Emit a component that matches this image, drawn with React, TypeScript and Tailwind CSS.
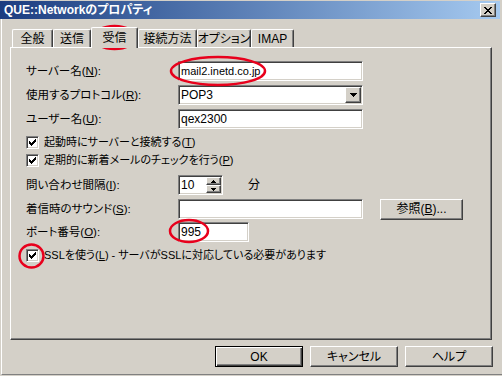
import React from 'react'

const sunken =
  'bg-white border border-t-[#808080] border-l-[#808080] border-b-white border-r-white shadow-[inset_1px_1px_0_#404040,inset_-1px_-1px_0_#d4d0c8]'
const raised =
  'bg-[#d4d0c8] border border-t-white border-l-white border-b-[#404040] border-r-[#404040] shadow-[inset_-1px_-1px_0_#808080]'

function Check() {
  return (
    <span className={`${sunken} w-[13px] h-[13px] flex items-center justify-center shrink-0`}>
      <svg width="7" height="7" viewBox="0 0 7 7" shapeRendering="crispEdges">
        <path d="M0 2h1v3H0z M1 3h1v3H1z M2 4h1v3H2z M3 3h1v3H3z M4 2h1v3H4z M5 1h1v3H5z M6 0h1v3H6z" fill="#000" />
      </svg>
    </span>
  )
}

function Label({ text, k, w = 'w-[152px]' }: { text: string; k: string; w?: string }) {
  return (
    <span className={`${w} shrink-0 text-[11.5px]`}>
      {text}(<u>{k}</u>):
    </span>
  )
}

function Tab({ label, w, active }: { label: string; w: string; active?: boolean }) {
  if (active) {
    return (
      <div
        className={`${w} h-[21px] -mb-[1px] relative z-10 bg-[#d4d0c8] border-t border-l border-white border-r border-r-[#404040] shadow-[inset_-1px_0_0_#808080] rounded-t-[2px] flex items-start justify-center pt-[3px] whitespace-nowrap`}
      >
        {label}
      </div>
    )
  }
  return (
    <div
      className={`${w} h-[18px] bg-[#d4d0c8] border-t border-l border-white border-r border-r-[#404040] shadow-[inset_-1px_0_0_#808080] rounded-t-[2px] flex items-center justify-center pt-[1px] whitespace-nowrap`}
    >
      {label}
    </div>
  )
}

function Btn({ children, w, def }: { children: React.ReactNode; w: string; def?: boolean }) {
  if (def) {
    return (
      <div
        className={`${w} h-[21px] border border-black bg-[#d4d0c8] shadow-[inset_1px_1px_0_#fff,inset_-1px_-1px_0_#404040,inset_-2px_-2px_0_#808080] flex items-center justify-center`}
      >
        {children}
      </div>
    )
  }
  return <div className={`${w} h-[21px] ${raised} flex items-center justify-center`}>{children}</div>
}

export default function App() {
  return (
    <div className="w-[502px] h-[376px] bg-[#d4d0c8] relative overflow-hidden font-['Liberation_Sans','Noto_Sans_CJK_JP',sans-serif] [font-feature-settings:'palt'] text-[12px] leading-[14px] text-black">
      <div className="pt-[1px] flex flex-col h-full">
        {/* title bar */}
        <div className="w-[500px] h-[18px] bg-gradient-to-r from-[#1c3d80] to-[#a6caf0] flex items-center justify-between pl-[4px] pr-[4px]">
          <span className="text-white font-bold text-[12px]">QUE::Networkのプロパティ</span>
          <div className={`w-[16px] h-[14px] ${raised} flex items-center justify-center`}>
            <svg width="8" height="7" viewBox="0 0 8 7" shapeRendering="crispEdges">
              <path d="M0 0h2v1H0z M1 1h2v1H1z M2 2h1v1H2z M3 3h2v1H3z M2 4h1v1H2z M1 5h2v1H1z M0 6h2v1H0z M6 0h2v1H6z M5 1h2v1H5z M5 2h1v1H5z M5 4h1v1H5z M5 5h2v1H5z M6 6h2v1H6z M3 2h2v1H3z M3 4h2v1H3z" fill="#000" />
            </svg>
          </div>
        </div>

        {/* body */}
        <div className="flex-1 ml-[1px] border-l border-white border-b border-b-[#808080] mb-[1px] flex flex-col">
          <div className="h-[28px] flex items-end pl-[10px]">
            <Tab label="全般" w="w-[41px]" />
            <Tab label="送信" w="w-[38px]" />
            <Tab label="受信" w="w-[47px]" active />
            <Tab label="接続方法" w="w-[59px]" />
            <Tab label="オプション" w="w-[54px]" />
            <Tab label="IMAP" w="w-[43px]" />
          </div>

          <div className="ml-[8px] w-[482px] h-[293px] border border-t-white border-l-white border-b-[#404040] border-r-[#404040] shadow-[inset_-1px_-1px_0_#808080] pt-[11px] pl-[15px] flex flex-col">
            <div className="h-[24px] flex items-center">
              <Label text="サーバー名" k="N" />
              <div className={`${sunken} w-[185px] h-[20px] flex items-center pl-[2px] text-[11px]`}>mail2.inetd.co.jp</div>
            </div>
            <div className="h-[24px] flex items-center">
              <Label text="使用するプロトコル" k="R" />
              <div className={`${sunken} w-[185px] h-[20px] flex items-center justify-between pl-[2px] pr-[1px]`}>
                <span>POP3</span>
                <div className={`w-[16px] h-[16px] ${raised} flex items-center justify-center`}>
                  <svg width="7" height="4" viewBox="0 0 7 4" shapeRendering="crispEdges">
                    <path d="M0 0h7v1H0z M1 1h5v1H1z M2 2h3v1H2z M3 3h1v1H3z" fill="#000" />
                  </svg>
                </div>
              </div>
            </div>
            <div className="h-[24px] flex items-center">
              <Label text="ユーザー名" k="U" />
              <div className={`${sunken} w-[185px] h-[20px] flex items-center pl-[2px]`}>qex2300</div>
            </div>
            <div className="h-[18px] mt-[2px] flex items-center gap-[5px] text-[11px]">
              <Check />
              <span>
                起動時にサーバーと接続する(<u>T</u>)
              </span>
            </div>
            <div className="h-[18px] flex items-center gap-[5px] text-[11px]">
              <Check />
              <span>
                定期的に新着メールのチェックを行う(<u>P</u>)
              </span>
            </div>
            <div className="h-[24px] mt-[4px] flex items-center">
              <Label text="問い合わせ間隔" k="I" />
              <div className={`${sunken} w-[45px] h-[20px] flex items-center justify-between pl-[2px] pr-[1px]`}>
                <span>10</span>
                <div className="flex flex-col w-[15px] h-[16px]">
                  <div className={`h-[8px] ${raised} flex items-center justify-center`}>
                    <svg width="5" height="3" viewBox="0 0 5 3" shapeRendering="crispEdges">
                      <path d="M2 0h1v1H2z M1 1h3v1H1z M0 2h5v1H0z" fill="#000" />
                    </svg>
                  </div>
                  <div className={`h-[8px] ${raised} flex items-center justify-center`}>
                    <svg width="5" height="3" viewBox="0 0 5 3" shapeRendering="crispEdges">
                      <path d="M0 0h5v1H0z M1 1h3v1H1z M2 2h1v1H2z" fill="#000" />
                    </svg>
                  </div>
                </div>
              </div>
              <span className="ml-[25px]">分</span>
            </div>
            <div className="h-[24px] flex items-center">
              <Label text="着信時のサウンド" k="S" />
              <div className={`${sunken} w-[185px] h-[20px]`} />
              <div className="ml-[17px]">
                <Btn w="w-[83px]">
                  参照(<u>B</u>)...
                </Btn>
              </div>
            </div>
            <div className="h-[22px] flex items-center">
              <Label text="ポート番号" k="O" />
              <div className={`${sunken} w-[71px] h-[20px] flex items-center pl-[2px]`}>995</div>
            </div>
            <div className="h-[18px] mt-[3px] flex items-center gap-[5px] text-[11px]">
              <Check />
              <span>
                SSLを使う(<u>L</u>) - サーバがSSLに対応している必要があります
              </span>
            </div>
          </div>

          <div className="mt-[6px] ml-[213px] flex gap-[7px]">
            <Btn w="w-[88px]" def>
              OK
            </Btn>
            <Btn w="w-[88px]">キャンセル</Btn>
            <Btn w="w-[88px]">ヘルプ</Btn>
          </div>
        </div>
      </div>

      {/* red annotation ellipses */}
      <svg className="absolute inset-0 pointer-events-none" width="502" height="376" viewBox="0 0 502 376">
        <g fill="none" stroke="#e8001c" strokeWidth="2.5">
          <ellipse cx="114.5" cy="37.5" rx="21" ry="11.5" />
          <ellipse cx="218" cy="71" rx="47" ry="14" />
          <ellipse cx="189" cy="231" rx="19" ry="11" />
          <ellipse cx="31.5" cy="256" rx="12" ry="11.5" />
        </g>
      </svg>
    </div>
  )
}
